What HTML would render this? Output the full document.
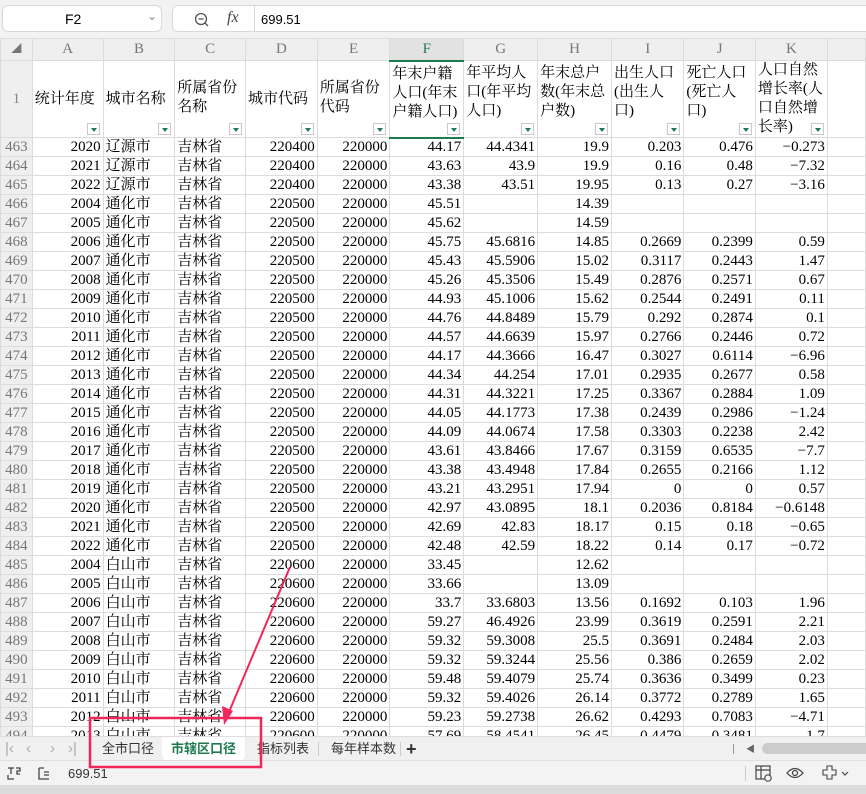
<!DOCTYPE html>
<html><head><meta charset="utf-8">
<style>
*{box-sizing:border-box;margin:0;padding:0}
body{width:866px;height:794px;overflow:hidden;background:#fff;position:relative;font-family:"Liberation Serif","Noto Serif CJK SC",serif;}
#fb{position:absolute;left:0;top:0;width:866px;height:38px;background:#f2f2f2;}
.nb{position:absolute;left:2px;top:5px;width:160px;height:27px;background:#fff;border:1px solid #d8d8d8;border-radius:6px;font:14px "Liberation Sans",sans-serif;}
.fx{position:absolute;left:172px;top:5px;width:84px;height:27px;background:#fff;border:1px solid #d8d8d8;border-radius:6px 0 0 6px;}
.fi{position:absolute;left:254px;top:5px;width:620px;height:27px;background:#fff;border:1px solid #d8d8d8;font:13px "Liberation Sans",sans-serif;padding:6px 0 0 6px;}
table{position:absolute;left:0;top:38px;border-collapse:collapse;table-layout:fixed;}
td{border:1px solid #dcdcdc;height:19px;font-size:15px;padding:0 2px;white-space:nowrap;overflow:hidden;line-height:17px;}
td.r{text-align:right}
td.h{background:#efefef;color:#777;text-align:center;font-size:15px;}
tr.col td{height:22px;background:#efefef;color:#777;text-align:center;}
tr.col td.sel{background:#e2e2e2;border-bottom:2px solid #1e7b4f;color:#1e7b4f}
tr.hd td{height:77px;vertical-align:top;position:relative;padding-top:3px;line-height:19px;white-space:normal;word-break:break-all}
tr.hd td.h{vertical-align:middle;padding-top:0}
.dd{position:absolute;right:3px;bottom:2px;width:13px;height:12px;border:1px solid #c8c8c8;background:#fff}
.dd:after{content:"";position:absolute;left:3px;top:4px;border-left:3px solid transparent;border-right:3px solid transparent;border-top:4px solid #1e7b4f}
tr.hd td.f{border-bottom:2px solid #1e7b4f}
td.rn{color:#888}
#tabs{position:absolute;left:0;top:736px;width:866px;height:24px;background:#f0f0f0;border-top:1px solid #ddd;font:13px "Liberation Sans","Noto Sans CJK SC",sans-serif;}
.tab{position:absolute;top:0;height:24px;line-height:24px;color:#333}
.nav{position:absolute;top:0;height:24px;line-height:23px;color:#aaa;font-size:15px}
#st{position:absolute;left:0;top:760px;width:866px;height:25px;background:#f3f3f3;border-top:1px solid #e0e0e0;font:13px "Liberation Sans",sans-serif;}
#bot{position:absolute;left:0;top:785px;width:866px;height:9px;background:#dcdcdc}
</style></head><body>
<div id="fb">
<div class="nb"><span style="position:absolute;left:62px;top:5px">F2</span><span style="position:absolute;left:144px;top:3px;color:#888;font-size:12px">&#8964;</span></div>
<div class="fx"><svg style="position:absolute;left:21px;top:6px" width="16" height="16"><circle cx="7" cy="7" r="5.5" fill="none" stroke="#555" stroke-width="1.3"/><line x1="4.5" y1="7" x2="9.5" y2="7" stroke="#555" stroke-width="1.3"/><line x1="11" y1="11" x2="14" y2="14" stroke="#555" stroke-width="1.3"/></svg><span style="position:absolute;left:54px;top:3px;font:italic 16px 'Liberation Serif',serif;color:#444">fx</span></div>
<div class="fi">699.51</div>
</div>
<table>
<colgroup><col style="width:32px"><col style="width:73px"><col style="width:73px"><col style="width:72px"><col style="width:73px"><col style="width:74px"><col style="width:76px"><col style="width:75px"><col style="width:76px"><col style="width:74px"><col style="width:73px"><col style="width:73px"><col style="width:40px"></colgroup>
<tr class="col"><td style="font-size:10px">&#9698;</td><td>A</td><td>B</td><td>C</td><td>D</td><td>E</td><td class="sel">F</td><td>G</td><td>H</td><td>I</td><td>J</td><td>K</td><td></td></tr>
<tr class="hd"><td class="h rn">1</td><td style="vertical-align:middle;padding-top:0">统计年度<span class="dd"></span></td><td style="vertical-align:middle;padding-top:0">城市名称<span class="dd"></span></td><td style="padding-top:18px">所属省份名称<span class="dd"></span></td><td style="vertical-align:middle;padding-top:0">城市代码<span class="dd"></span></td><td style="padding-top:18px">所属省份代码<span class="dd"></span></td><td class="f">年末户籍人口(年末户籍人口)<span class="dd"></span></td><td>年平均人口(年平均人口)<span class="dd"></span></td><td>年末总户数(年末总户数)<span class="dd"></span></td><td>出生人口(出生人口)<span class="dd"></span></td><td>死亡人口(死亡人口)<span class="dd"></span></td><td style="padding-top:0">人口自然增长率(人口自然增长率)<span class="dd"></span></td><td></td></tr>
<tr><td class="h">463</td><td class="r">2020</td><td>辽源市</td><td>吉林省</td><td class="r">220400</td><td class="r">220000</td><td class="r">44.17</td><td class="r">44.4341</td><td class="r">19.9</td><td class="r">0.203</td><td class="r">0.476</td><td class="r">−0.273</td><td></td></tr>
<tr><td class="h">464</td><td class="r">2021</td><td>辽源市</td><td>吉林省</td><td class="r">220400</td><td class="r">220000</td><td class="r">43.63</td><td class="r">43.9</td><td class="r">19.9</td><td class="r">0.16</td><td class="r">0.48</td><td class="r">−7.32</td><td></td></tr>
<tr><td class="h">465</td><td class="r">2022</td><td>辽源市</td><td>吉林省</td><td class="r">220400</td><td class="r">220000</td><td class="r">43.38</td><td class="r">43.51</td><td class="r">19.95</td><td class="r">0.13</td><td class="r">0.27</td><td class="r">−3.16</td><td></td></tr>
<tr><td class="h">466</td><td class="r">2004</td><td>通化市</td><td>吉林省</td><td class="r">220500</td><td class="r">220000</td><td class="r">45.51</td><td class="r"></td><td class="r">14.39</td><td class="r"></td><td class="r"></td><td class="r"></td><td></td></tr>
<tr><td class="h">467</td><td class="r">2005</td><td>通化市</td><td>吉林省</td><td class="r">220500</td><td class="r">220000</td><td class="r">45.62</td><td class="r"></td><td class="r">14.59</td><td class="r"></td><td class="r"></td><td class="r"></td><td></td></tr>
<tr><td class="h">468</td><td class="r">2006</td><td>通化市</td><td>吉林省</td><td class="r">220500</td><td class="r">220000</td><td class="r">45.75</td><td class="r">45.6816</td><td class="r">14.85</td><td class="r">0.2669</td><td class="r">0.2399</td><td class="r">0.59</td><td></td></tr>
<tr><td class="h">469</td><td class="r">2007</td><td>通化市</td><td>吉林省</td><td class="r">220500</td><td class="r">220000</td><td class="r">45.43</td><td class="r">45.5906</td><td class="r">15.02</td><td class="r">0.3117</td><td class="r">0.2443</td><td class="r">1.47</td><td></td></tr>
<tr><td class="h">470</td><td class="r">2008</td><td>通化市</td><td>吉林省</td><td class="r">220500</td><td class="r">220000</td><td class="r">45.26</td><td class="r">45.3506</td><td class="r">15.49</td><td class="r">0.2876</td><td class="r">0.2571</td><td class="r">0.67</td><td></td></tr>
<tr><td class="h">471</td><td class="r">2009</td><td>通化市</td><td>吉林省</td><td class="r">220500</td><td class="r">220000</td><td class="r">44.93</td><td class="r">45.1006</td><td class="r">15.62</td><td class="r">0.2544</td><td class="r">0.2491</td><td class="r">0.11</td><td></td></tr>
<tr><td class="h">472</td><td class="r">2010</td><td>通化市</td><td>吉林省</td><td class="r">220500</td><td class="r">220000</td><td class="r">44.76</td><td class="r">44.8489</td><td class="r">15.79</td><td class="r">0.292</td><td class="r">0.2874</td><td class="r">0.1</td><td></td></tr>
<tr><td class="h">473</td><td class="r">2011</td><td>通化市</td><td>吉林省</td><td class="r">220500</td><td class="r">220000</td><td class="r">44.57</td><td class="r">44.6639</td><td class="r">15.97</td><td class="r">0.2766</td><td class="r">0.2446</td><td class="r">0.72</td><td></td></tr>
<tr><td class="h">474</td><td class="r">2012</td><td>通化市</td><td>吉林省</td><td class="r">220500</td><td class="r">220000</td><td class="r">44.17</td><td class="r">44.3666</td><td class="r">16.47</td><td class="r">0.3027</td><td class="r">0.6114</td><td class="r">−6.96</td><td></td></tr>
<tr><td class="h">475</td><td class="r">2013</td><td>通化市</td><td>吉林省</td><td class="r">220500</td><td class="r">220000</td><td class="r">44.34</td><td class="r">44.254</td><td class="r">17.01</td><td class="r">0.2935</td><td class="r">0.2677</td><td class="r">0.58</td><td></td></tr>
<tr><td class="h">476</td><td class="r">2014</td><td>通化市</td><td>吉林省</td><td class="r">220500</td><td class="r">220000</td><td class="r">44.31</td><td class="r">44.3221</td><td class="r">17.25</td><td class="r">0.3367</td><td class="r">0.2884</td><td class="r">1.09</td><td></td></tr>
<tr><td class="h">477</td><td class="r">2015</td><td>通化市</td><td>吉林省</td><td class="r">220500</td><td class="r">220000</td><td class="r">44.05</td><td class="r">44.1773</td><td class="r">17.38</td><td class="r">0.2439</td><td class="r">0.2986</td><td class="r">−1.24</td><td></td></tr>
<tr><td class="h">478</td><td class="r">2016</td><td>通化市</td><td>吉林省</td><td class="r">220500</td><td class="r">220000</td><td class="r">44.09</td><td class="r">44.0674</td><td class="r">17.58</td><td class="r">0.3303</td><td class="r">0.2238</td><td class="r">2.42</td><td></td></tr>
<tr><td class="h">479</td><td class="r">2017</td><td>通化市</td><td>吉林省</td><td class="r">220500</td><td class="r">220000</td><td class="r">43.61</td><td class="r">43.8466</td><td class="r">17.67</td><td class="r">0.3159</td><td class="r">0.6535</td><td class="r">−7.7</td><td></td></tr>
<tr><td class="h">480</td><td class="r">2018</td><td>通化市</td><td>吉林省</td><td class="r">220500</td><td class="r">220000</td><td class="r">43.38</td><td class="r">43.4948</td><td class="r">17.84</td><td class="r">0.2655</td><td class="r">0.2166</td><td class="r">1.12</td><td></td></tr>
<tr><td class="h">481</td><td class="r">2019</td><td>通化市</td><td>吉林省</td><td class="r">220500</td><td class="r">220000</td><td class="r">43.21</td><td class="r">43.2951</td><td class="r">17.94</td><td class="r">0</td><td class="r">0</td><td class="r">0.57</td><td></td></tr>
<tr><td class="h">482</td><td class="r">2020</td><td>通化市</td><td>吉林省</td><td class="r">220500</td><td class="r">220000</td><td class="r">42.97</td><td class="r">43.0895</td><td class="r">18.1</td><td class="r">0.2036</td><td class="r">0.8184</td><td class="r">−0.6148</td><td></td></tr>
<tr><td class="h">483</td><td class="r">2021</td><td>通化市</td><td>吉林省</td><td class="r">220500</td><td class="r">220000</td><td class="r">42.69</td><td class="r">42.83</td><td class="r">18.17</td><td class="r">0.15</td><td class="r">0.18</td><td class="r">−0.65</td><td></td></tr>
<tr><td class="h">484</td><td class="r">2022</td><td>通化市</td><td>吉林省</td><td class="r">220500</td><td class="r">220000</td><td class="r">42.48</td><td class="r">42.59</td><td class="r">18.22</td><td class="r">0.14</td><td class="r">0.17</td><td class="r">−0.72</td><td></td></tr>
<tr><td class="h">485</td><td class="r">2004</td><td>白山市</td><td>吉林省</td><td class="r">220600</td><td class="r">220000</td><td class="r">33.45</td><td class="r"></td><td class="r">12.62</td><td class="r"></td><td class="r"></td><td class="r"></td><td></td></tr>
<tr><td class="h">486</td><td class="r">2005</td><td>白山市</td><td>吉林省</td><td class="r">220600</td><td class="r">220000</td><td class="r">33.66</td><td class="r"></td><td class="r">13.09</td><td class="r"></td><td class="r"></td><td class="r"></td><td></td></tr>
<tr><td class="h">487</td><td class="r">2006</td><td>白山市</td><td>吉林省</td><td class="r">220600</td><td class="r">220000</td><td class="r">33.7</td><td class="r">33.6803</td><td class="r">13.56</td><td class="r">0.1692</td><td class="r">0.103</td><td class="r">1.96</td><td></td></tr>
<tr><td class="h">488</td><td class="r">2007</td><td>白山市</td><td>吉林省</td><td class="r">220600</td><td class="r">220000</td><td class="r">59.27</td><td class="r">46.4926</td><td class="r">23.99</td><td class="r">0.3619</td><td class="r">0.2591</td><td class="r">2.21</td><td></td></tr>
<tr><td class="h">489</td><td class="r">2008</td><td>白山市</td><td>吉林省</td><td class="r">220600</td><td class="r">220000</td><td class="r">59.32</td><td class="r">59.3008</td><td class="r">25.5</td><td class="r">0.3691</td><td class="r">0.2484</td><td class="r">2.03</td><td></td></tr>
<tr><td class="h">490</td><td class="r">2009</td><td>白山市</td><td>吉林省</td><td class="r">220600</td><td class="r">220000</td><td class="r">59.32</td><td class="r">59.3244</td><td class="r">25.56</td><td class="r">0.386</td><td class="r">0.2659</td><td class="r">2.02</td><td></td></tr>
<tr><td class="h">491</td><td class="r">2010</td><td>白山市</td><td>吉林省</td><td class="r">220600</td><td class="r">220000</td><td class="r">59.48</td><td class="r">59.4079</td><td class="r">25.74</td><td class="r">0.3636</td><td class="r">0.3499</td><td class="r">0.23</td><td></td></tr>
<tr><td class="h">492</td><td class="r">2011</td><td>白山市</td><td>吉林省</td><td class="r">220600</td><td class="r">220000</td><td class="r">59.32</td><td class="r">59.4026</td><td class="r">26.14</td><td class="r">0.3772</td><td class="r">0.2789</td><td class="r">1.65</td><td></td></tr>
<tr><td class="h">493</td><td class="r">2012</td><td>白山市</td><td>吉林省</td><td class="r">220600</td><td class="r">220000</td><td class="r">59.23</td><td class="r">59.2738</td><td class="r">26.62</td><td class="r">0.4293</td><td class="r">0.7083</td><td class="r">−4.71</td><td></td></tr>
<tr><td class="h">494</td><td class="r">2013</td><td>白山市</td><td>吉林省</td><td class="r">220600</td><td class="r">220000</td><td class="r">57.69</td><td class="r">58.4541</td><td class="r">26.45</td><td class="r">0.4479</td><td class="r">0.3481</td><td class="r">1.7</td><td></td></tr>
</table>
<div id="tabs">
<span class="nav" style="left:5px">|‹</span>
<span class="nav" style="left:26px">‹</span>
<span class="nav" style="left:50px">›</span>
<span class="nav" style="left:68px">›|</span>
<span class="tab" style="left:102px">全市口径</span>
<span class="tab" style="left:162px;width:83px;background:#fff;color:#1e7b4f;font-weight:bold;text-align:center;border-radius:0 0 6px 6px">市辖区口径</span>
<span class="tab" style="left:257px">指标列表</span>
<span class="tab" style="left:318px;height:14px;top:5px;border-left:1px solid #ccc"></span>
<span class="tab" style="left:331px">每年样本数</span>
<span class="tab" style="left:400px;height:14px;top:5px;border-left:1px solid #ccc"></span>
<span class="tab" style="left:406px;font-size:18px;font-weight:bold">+</span>
<span class="tab" style="left:733px;height:10px;top:7px;border-left:1px solid #999"></span>
<span class="tab" style="left:746px;font-size:9px;color:#666">◀</span>
<span style="position:absolute;left:762px;top:6px;width:110px;height:11px;background:#ccc;border-radius:6px"></span>
</div>
<div id="st">
<svg style="position:absolute;left:6px;top:5px" width="16" height="15"><path d="M2 2h6M5 2v6M10 2h4v3h-3v3h3M2 9v4h6" fill="none" stroke="#444" stroke-width="1.3"/></svg>
<svg style="position:absolute;left:37px;top:5px" width="14" height="15"><path d="M2 2v11h10M2 2h5M7 6h5M7 9h5" fill="none" stroke="#444" stroke-width="1.3"/></svg>
<span style="position:absolute;left:68px;top:5px;color:#333">699.51</span>
<span style="position:absolute;left:745px;top:5px;height:15px;border-left:1px solid #ccc"></span>
<svg style="position:absolute;left:755px;top:4px" width="18" height="17"><rect x="1" y="1" width="14" height="13" fill="none" stroke="#444" stroke-width="1.2"/><path d="M1 5h14M6 1v13" stroke="#444" stroke-width="1.2"/><circle cx="13" cy="13" r="3.2" fill="#f3f3f3" stroke="#444" stroke-width="1.1"/></svg>
<svg style="position:absolute;left:786px;top:5px" width="18" height="14"><path d="M1 7Q9 -2 17 7Q9 16 1 7Z" fill="none" stroke="#444" stroke-width="1.2"/><circle cx="9" cy="7" r="2.5" fill="none" stroke="#444" stroke-width="1.2"/></svg>
<svg style="position:absolute;left:822px;top:4px" width="30" height="16"><path d="M5 1h5v4h4v5h-4v4h-5v-4h-4v-5h4z" fill="none" stroke="#444" stroke-width="1.1"/><path d="M20 7l3 3 3-3" fill="none" stroke="#444" stroke-width="1.2"/></svg>
</div>
<div id="bot"></div>
<svg style="position:absolute;left:0;top:0" width="866" height="794">
<rect x="90" y="718" width="171" height="49" fill="none" stroke="#f0275a" stroke-width="2.5"/>
<line x1="290" y1="567" x2="229" y2="712" stroke="#f0275a" stroke-width="2"/>
<path d="M224 725L222 706L233 711Z" fill="#f0275a"/>
</svg>
</body></html>
